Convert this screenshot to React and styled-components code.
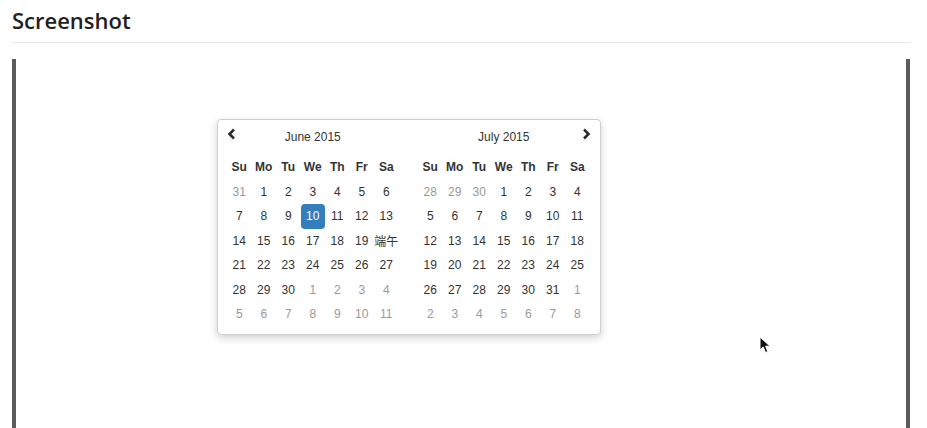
import React from 'react';
import styled, { createGlobalStyle } from 'styled-components';

const GlobalStyle = createGlobalStyle`
  html, body {
    margin: 0;
    padding: 0;
    background: #fff;
    overflow: hidden;
  }
`;

const Page = styled.div`
  padding: 0 17px 0 12px;
  height: 428px;
  display: flex;
  flex-direction: column;
`;

const Heading = styled.h2`
  margin: 0;
  padding: 6px 0 8px;
  font-family: "Open Sans", "Noto Sans", sans-serif;
  font-weight: 600;
  font-size: 22px;
  line-height: 28px;
  color: #1f1f1f;
  border-bottom: 1px solid #e6e6e6;
`;

const Frame = styled.div`
  position: relative;
  flex: 1;
  margin-top: 16px;
  border-left: 4px solid #5b5b5b;
  border-right: 4px solid #5b5b5b;
  padding: 60px 0 0 201px;
`;

const Picker = styled.div`
  display: inline-flex;
  gap: 19.5px;
  padding: 5px 10px 7px 9px;
  background: #fff;
  border: 1px solid #cfcfcf;
  border-radius: 4px;
  box-shadow: 0 3px 8px rgba(0, 0, 0, 0.18);
  font-family: "Liberation Sans", "Noto Sans CJK SC", sans-serif;
  font-size: 12px;
  color: #333;
`;

const Month = styled.div`
  width: 171.5px;
`;

const MonthRow = styled.div`
  position: relative;
  height: 24px;
  display: flex;
  align-items: center;
  justify-content: center;
  margin-bottom: 6px;
  color: #333;
`;

const Arrow = styled.span`
  position: absolute;
  top: 3px;
  ${({ $side }) => ($side === 'left' ? 'left: 0;' : 'right: -1px;')}
  display: flex;
`;

const Grid = styled.div`
  display: grid;
  grid-template-columns: repeat(7, 24.5px);
  grid-auto-rows: 24.5px;
`;

const DayName = styled.div`
  display: flex;
  align-items: center;
  justify-content: center;
  font-weight: bold;
  color: #333;
  height: 24px;
`;

const Day = styled.div`
  display: flex;
  align-items: center;
  justify-content: center;
  border-radius: 4px;
  white-space: nowrap;
  color: ${({ $off, $active }) => ($active ? '#fff' : $off ? '#999' : '#333')};
  background: ${({ $active }) => ($active ? '#357ebd' : 'transparent')};
`;

const Cursor = styled.svg`
  position: absolute;
  left: 743px;
  top: 277px;
`;

const dayNames = ['Su', 'Mo', 'Tu', 'We', 'Th', 'Fr', 'Sa'];

const june = [
  [31, 1, 2, 3, 4, 5, 6],
  [7, 8, 9, 10, 11, 12, 13],
  [14, 15, 16, 17, 18, 19, '端午'],
  [21, 22, 23, 24, 25, 26, 27],
  [28, 29, 30, 1, 2, 3, 4],
  [5, 6, 7, 8, 9, 10, 11],
];

const july = [
  [28, 29, 30, 1, 2, 3, 4],
  [5, 6, 7, 8, 9, 10, 11],
  [12, 13, 14, 15, 16, 17, 18],
  [19, 20, 21, 22, 23, 24, 25],
  [26, 27, 28, 29, 30, 31, 1],
  [2, 3, 4, 5, 6, 7, 8],
];

const isOff = (row, d) => (row === 0 && typeof d === 'number' && d > 20) || (row >= 4 && typeof d === 'number' && d < 15);

const Chevron = ({ dir }) => (
  <svg width="9" height="12" viewBox="0 0 9 12">
    <path
      d={dir === 'left' ? 'M7 1.5 L2.5 6 L7 10.5' : 'M2 1.5 L6.5 6 L2 10.5'}
      fill="none"
      stroke="#2b2b2b"
      strokeWidth="2.6"
    />
  </svg>
);

const Calendar = ({ title, weeks, arrow, active }) => (
  <Month>
    <MonthRow>
      {arrow && (
        <Arrow $side={arrow}>
          <Chevron dir={arrow} />
        </Arrow>
      )}
      {title}
    </MonthRow>
    <Grid>
      {dayNames.map((n) => (
        <DayName key={n}>{n}</DayName>
      ))}
      {weeks.map((week, r) =>
        week.map((d, i) => (
          <Day key={`${r}-${i}`} $off={isOff(r, d)} $active={active && r === 1 && d === active}>
            {d}
          </Day>
        ))
      )}
    </Grid>
  </Month>
);

const App = () => (
  <>
    <GlobalStyle />
    <Page>
      <Heading>Screenshot</Heading>
      <Frame>
        <Picker>
          <Calendar title="June 2015" weeks={june} arrow="left" active={10} />
          <Calendar title="July 2015" weeks={july} arrow="right" />
        </Picker>
        <Cursor width="14" height="18" viewBox="0 0 14 18">
          <path d="M1 1 L1 14 L4.2 11 L6.5 16.5 L8.8 15.5 L6.6 10.2 L11 10.2 Z" fill="#111" stroke="#fff" strokeWidth="1" />
        </Cursor>
      </Frame>
    </Page>
  </>
);

export default App;
